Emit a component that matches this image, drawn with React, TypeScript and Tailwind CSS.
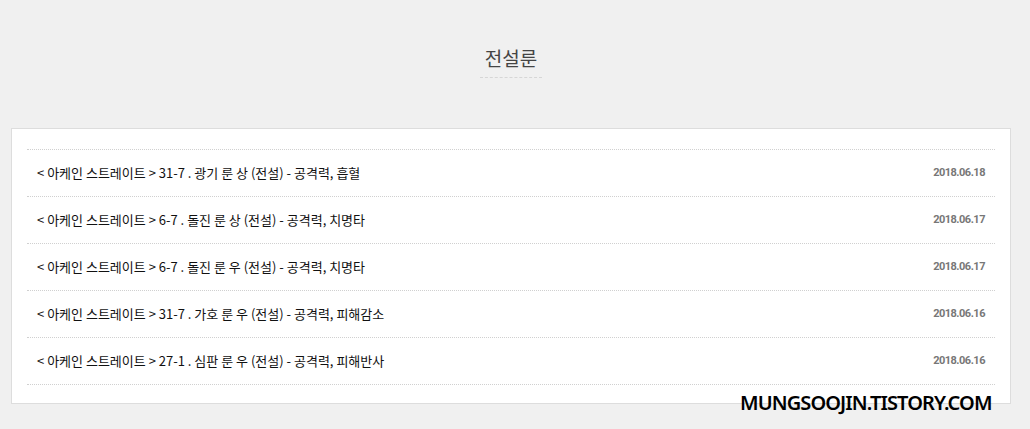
import React from "react";

const rows = [
  { t: "< 아케인 스트레이트 > 31-7 . 광기 룬 상 (전설) - 공격력, 흡혈", d: "2018.06.18" },
  { t: "< 아케인 스트레이트 > 6-7 . 돌진 룬 상 (전설) - 공격력, 치명타", d: "2018.06.17" },
  { t: "< 아케인 스트레이트 > 6-7 . 돌진 룬 우 (전설) - 공격력, 치명타", d: "2018.06.17" },
  { t: "< 아케인 스트레이트 > 31-7 . 가호 룬 우 (전설) - 공격력, 피해감소", d: "2018.06.16" },
  { t: "< 아케인 스트레이트 > 27-1 . 심판 룬 우 (전설) - 공격력, 피해반사", d: "2018.06.16" },
];

export default function App() {
  return (
    <div
      className="relative w-[1030px] h-[429px] bg-[#f0f0f0] overflow-hidden"
      style={{ fontFamily: '"Noto Sans CJK KR", "Noto Sans", sans-serif' }}
    >
      <div className="flex justify-center w-[1022px] pt-[44px]">
        <h2 className="px-[5px] pb-[6px] border-b border-dashed border-[#d6d6d6] text-[19px] leading-[27px] text-[#444]">
          전설룬
        </h2>
      </div>
      <div className="ml-[11px] mt-[50px] w-[1000px] bg-white border border-[#dddddd] px-[15px] pt-[20px] pb-[18px]">
        <ul className="border-t border-dotted border-[#d0d0d0]">
          {rows.map((r, i) => (
            <li
              key={i}
              className="flex items-center justify-between h-[47px] border-b border-dotted border-[#d0d0d0] pl-[10px] pr-[10px]"
            >
              <span className="text-[13px] text-[#111]">{r.t}</span>
              <span
                className="text-[11px] font-bold text-[#777] tracking-[-0.5px]"
                style={{ fontFamily: 'Roboto, "Liberation Sans", sans-serif' }}
              >
                {r.d}
              </span>
            </li>
          ))}
        </ul>
      </div>
      <div
        className="absolute left-[740px] top-[389px] text-[20px] leading-[27px] font-semibold text-black tracking-[-0.9px]"
        style={{ fontFamily: '"Noto Sans", sans-serif' }}
      >
        MUNGSOOJIN.TISTORY.COM
      </div>
    </div>
  );
}
